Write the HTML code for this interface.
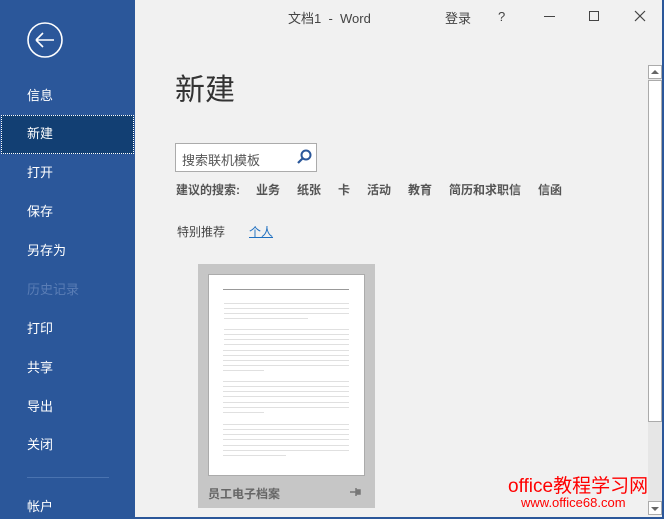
<!DOCTYPE html>
<html><head><meta charset="utf-8"><style>
*{margin:0;padding:0;box-sizing:border-box}
body{width:664px;height:519px;overflow:hidden;background:#f1f1f1;font-family:"Liberation Sans","Noto Sans CJK SC",sans-serif;position:relative}
.side{position:absolute;left:0;top:0;width:135px;height:519px;background:#2b579a}
.it{position:absolute;left:27px;color:#fff;font-size:13px;line-height:16px}
.sel{position:absolute;left:1px;top:115px;width:133px;height:39px;background:#123f73;border:1px dotted #fff}
.a{position:absolute;color:#444;font-size:13px}
.ln{position:absolute;height:1px;background:#e0e0e0}
.wm{position:absolute;color:#ff0000}
</style></head><body>
<div class="side">
<svg style="position:absolute;left:27px;top:22px" width="36" height="36" viewBox="0 0 36 36"><circle cx="18" cy="18" r="17" fill="none" stroke="#fff" stroke-width="1.6"/><path d="M9 18H27M9 18L16 11M9 18L16 25" fill="none" stroke="#fff" stroke-width="1.6"/></svg>
<div class="it" style="top:88px">信息</div>
<div class="sel"></div>
<div class="it" style="top:126px">新建</div>
<div class="it" style="top:165px">打开</div>
<div class="it" style="top:204px">保存</div>
<div class="it" style="top:243px">另存为</div>
<div class="it" style="top:282px;color:#5a7db5">历史记录</div>
<div class="it" style="top:321px">打印</div>
<div class="it" style="top:360px">共享</div>
<div class="it" style="top:399px">导出</div>
<div class="it" style="top:437px">关闭</div>
<div style="position:absolute;left:27px;top:477px;width:82px;height:1px;background:#4a73b0"></div>
<div class="it" style="top:499px">帐户</div>
</div>
<div style="position:absolute;right:0;top:0;width:2px;height:519px;background:#2b579a"></div>
<div style="position:absolute;left:135px;bottom:0;width:529px;height:2px;background:#2b579a"></div>
<div class="a" style="left:288px;top:8px;color:#444">文档1 &nbsp;- &nbsp;Word</div>
<div class="a" style="left:445px;top:8px">登录</div>
<div class="a" style="left:498px;top:9px">?</div>
<div style="position:absolute;left:544px;top:16px;width:11px;height:1px;background:#444"></div>
<div style="position:absolute;left:589px;top:11px;width:10px;height:10px;border:1px solid #444"></div>
<svg style="position:absolute;left:634px;top:10px" width="12" height="12"><path d="M1 1L11 11M11 1L1 11" stroke="#444" stroke-width="1.2"/></svg>
<div style="position:absolute;left:175px;top:65px;font-size:30px;color:#333">新建</div>
<div style="position:absolute;left:175px;top:143px;width:142px;height:29px;background:#fff;border:1px solid #ababab"></div>
<div class="a" style="left:182px;top:150px;color:#555">搜索联机模板</div>
<svg style="position:absolute;left:295px;top:148px" width="18" height="18"><circle cx="11" cy="7" r="4.5" fill="none" stroke="#2b579a" stroke-width="2"/><path d="M8 10L3 15" stroke="#2b579a" stroke-width="2.2"/></svg>
<div class="a" style="left:176px;top:181px;font-weight:bold;color:#555;font-size:12px">建议的搜索:</div>
<div class="a" style="left:256px;top:181px;font-weight:bold;color:#555;font-size:12px">业务</div>
<div class="a" style="left:297px;top:181px;font-weight:bold;color:#555;font-size:12px">纸张</div>
<div class="a" style="left:338px;top:181px;font-weight:bold;color:#555;font-size:12px">卡</div>
<div class="a" style="left:367px;top:181px;font-weight:bold;color:#555;font-size:12px">活动</div>
<div class="a" style="left:408px;top:181px;font-weight:bold;color:#555;font-size:12px">教育</div>
<div class="a" style="left:449px;top:181px;font-weight:bold;color:#555;font-size:12px">简历和求职信</div>
<div class="a" style="left:538px;top:181px;font-weight:bold;color:#555;font-size:12px">信函</div>
<div class="a" style="left:177px;top:223px;font-size:12px">特别推荐</div>
<div class="a" style="left:249px;top:223px;font-size:12px;color:#1e6fc0;text-decoration:underline">个人</div>
<div style="position:absolute;left:198px;top:264px;width:177px;height:244px;background:#c6c6c6"></div>
<div style="position:absolute;left:208px;top:274px;width:157px;height:202px;background:#fff;border:1px solid #ababab"></div>
<div style="position:absolute;left:223px;top:289px;width:126px;height:1px;background:#999"></div>
<div class="a" style="left:208px;top:485px;font-size:12px;font-weight:bold;color:#666">员工电子档案</div>
<svg style="position:absolute;left:350px;top:487px" width="12" height="10"><path d="M0 5H6M6 1V9M6 3H10V7H6" stroke="#777" stroke-width="1.5" fill="#777"/></svg>
<div style="position:absolute;left:648px;top:65px;width:14px;height:443px;background:#e6e6e6"></div>
<div style="position:absolute;left:648px;top:65px;width:14px;height:14px;background:#fff;border:1px solid #ababab"></div>
<div style="position:absolute;left:651px;top:70px;border:4px solid transparent;border-top:0;border-bottom:4px solid #666"></div>
<div style="position:absolute;left:648px;top:80px;width:14px;height:342px;background:#fff;border:1px solid #ababab"></div>
<div style="position:absolute;left:648px;top:501px;width:14px;height:14px;background:#fff;border:1px solid #ababab"></div>
<div style="position:absolute;left:651px;top:507px;border:4px solid transparent;border-bottom:0;border-top:4px solid #666"></div>
<div class="wm" style="left:508px;top:471px;font-size:19px">office教程学习网</div>
<div class="wm" style="left:521px;top:495px;font-size:13px">www.office68.com</div>
<div style="position:absolute;left:0;top:0">
<div class="ln" style="left:224px;top:303px;width:125px"></div><div class="ln" style="left:224px;top:308px;width:125px"></div><div class="ln" style="left:224px;top:313px;width:125px"></div><div class="ln" style="left:224px;top:318px;width:84px"></div>
<div class="ln" style="left:224px;top:329px;width:125px"></div><div class="ln" style="left:224px;top:334px;width:125px"></div><div class="ln" style="left:224px;top:339px;width:125px"></div><div class="ln" style="left:224px;top:344px;width:125px"></div><div class="ln" style="left:223px;top:350px;width:126px"></div><div class="ln" style="left:223px;top:355px;width:126px"></div><div class="ln" style="left:223px;top:360px;width:126px"></div><div class="ln" style="left:223px;top:365px;width:126px"></div><div class="ln" style="left:223px;top:370px;width:41px"></div>
<div class="ln" style="left:223px;top:381px;width:126px"></div><div class="ln" style="left:223px;top:386px;width:126px"></div><div class="ln" style="left:223px;top:391px;width:126px"></div><div class="ln" style="left:223px;top:396px;width:126px"></div><div class="ln" style="left:223px;top:402px;width:126px"></div><div class="ln" style="left:223px;top:407px;width:126px"></div><div class="ln" style="left:223px;top:412px;width:41px"></div>
<div class="ln" style="left:223px;top:424px;width:126px"></div><div class="ln" style="left:223px;top:429px;width:126px"></div><div class="ln" style="left:223px;top:434px;width:126px"></div><div class="ln" style="left:223px;top:439px;width:126px"></div><div class="ln" style="left:223px;top:445px;width:126px"></div><div class="ln" style="left:223px;top:450px;width:126px"></div><div class="ln" style="left:223px;top:455px;width:63px"></div>
</div>
</body></html>
